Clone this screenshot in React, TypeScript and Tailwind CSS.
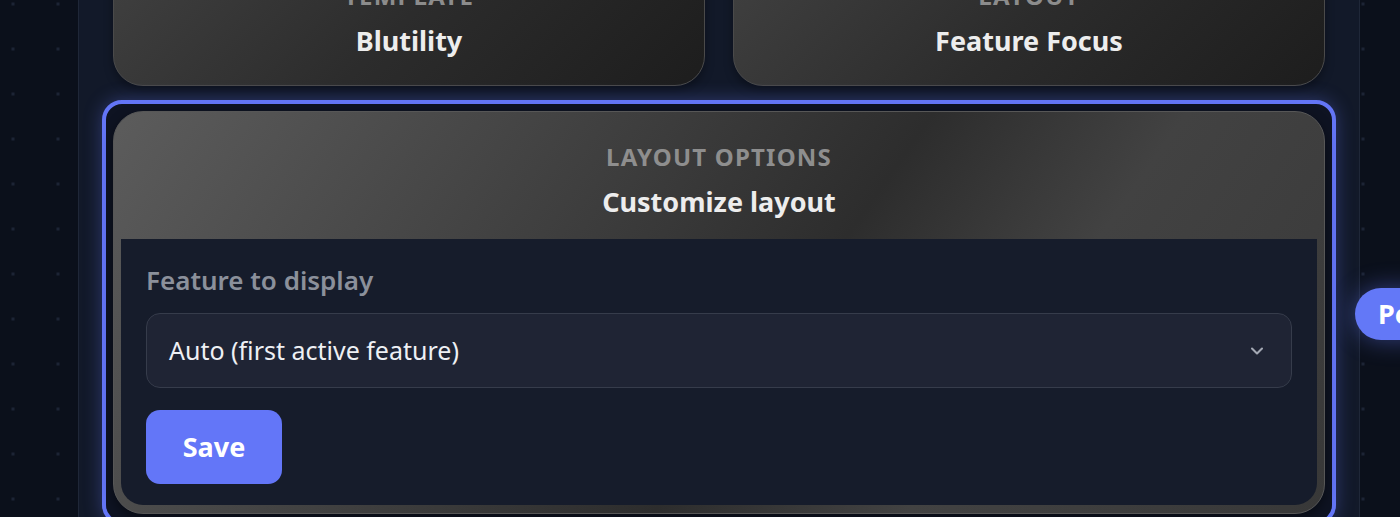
import { ChevronDown } from "lucide-react";

const font = { fontFamily: '"Noto Sans", "Lato", sans-serif' };

function SummaryCard({ label, title }: { label: string; title: string }) {
  return (
    <div className="rounded-[30px] border border-[#4a4a4a] bg-[linear-gradient(135deg,#414141_0%,#2c2c2c_50%,#1d1d1d_100%)] px-6 pt-8 pb-[27px] text-center shadow-[0_4px_10px_rgba(0,0,0,0.35)]">
      <div className="text-[24px] leading-[28px] font-bold uppercase tracking-[0.05em] text-[#8c8c8c]">{label}</div>
      <div className="mt-[14px] text-[27px] leading-[34px] font-bold text-[#ededed]">{title}</div>
    </div>
  );
}

export default function App() {
  return (
    <div
      style={font}
      className="relative flex h-[517px] w-full overflow-hidden bg-[#0b101b] bg-[radial-gradient(circle,#1c2435_1.5px,transparent_1.6px)] bg-[size:45px_45px] bg-[position:-9.5px_-18.5px]"
    >
      <div className="w-[78px] shrink-0" />

      <main className="w-[1282px] shrink-0 border-x border-[#1f2738] bg-[#121929] px-[34px]">
        <div className="-mt-[51px] flex flex-col">
          <div className="grid grid-cols-2 gap-[28px]">
            <SummaryCard label="Template" title="Blutility" />
            <SummaryCard label="Layout" title="Feature Focus" />
          </div>

          <div className="-mx-[11px] mt-[14px] rounded-[20px] border-4 border-[#6375f6] bg-[#0e1322] p-[7px] shadow-[0_0_18px_rgba(99,117,246,0.35)]">
            <div className="overflow-hidden rounded-[30px] border border-[#575757] bg-[linear-gradient(125deg,#5c5c5c_0%,#3c3c3c_38%,#2d2d2d_55%,#424242_72%,#383838_100%)] shadow-[0_4px_12px_rgba(0,0,0,0.45)]">
              <div className="pt-[31px] pb-5 text-center">
                <div className="text-[24px] leading-[28px] font-bold uppercase tracking-[0.05em] text-[#8e8e8e]">
                  Layout options
                </div>
                <div className="mt-[14px] text-[27px] leading-[34px] font-bold text-[#ededed]">
                  Customize layout
                </div>
              </div>

              <div className="mx-[7px] mb-2 rounded-b-[22px] bg-[#161c2b] px-[25px] pt-[22px] pb-[21px]">
                <div className="mb-[14px] text-[26px] leading-[38px] font-semibold text-[#8b909b]">
                  Feature to display
                </div>
                <div className="flex h-[75px] items-center justify-between rounded-[14px] border border-[#363c4b] bg-[#1f2434] pl-[22px] pr-[24px]">
                  <span className="text-[25px] text-[#eef0f4]">Auto (first active feature)</span>
                  <ChevronDown size={20} strokeWidth={2.5} className="text-[#a3a8b3]" />
                </div>
                <button className="mt-[22px] flex h-[74px] w-[136px] items-center justify-center rounded-[14px] bg-[#6376f8] text-[27px] font-bold text-white">
                  Save
                </button>
              </div>
            </div>
          </div>
        </div>
      </main>

      <button className="absolute top-[288px] left-[1355px] flex h-[52px] items-center rounded-l-full bg-[#6378f7] pr-3 pl-[23px] text-[27px] font-bold text-white shadow-[0_0_24px_rgba(99,120,247,0.45)]">
        Pe
      </button>
    </div>
  );
}
